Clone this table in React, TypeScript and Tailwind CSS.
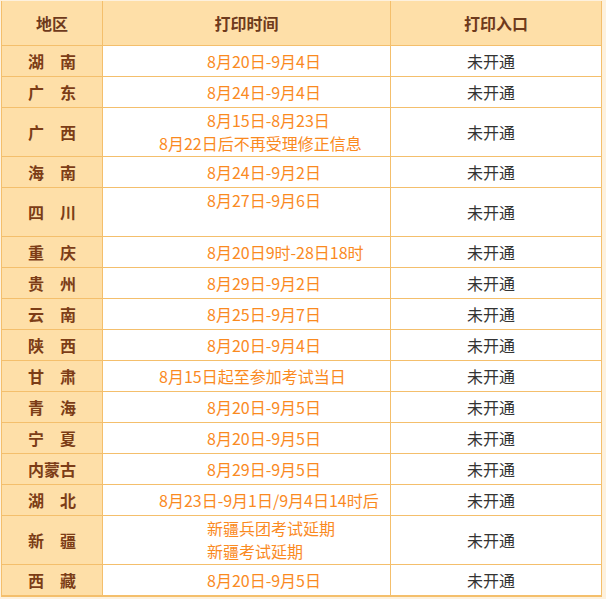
import React from "react";

interface Line {
  text: string;
  long?: boolean;
}

interface Row {
  region: string;
  lines: Line[];
  tall?: boolean;
}

const rows: Row[] = [
  { region: "湖　南", lines: [{ text: "8月20日-9月4日" }] },
  { region: "广　东", lines: [{ text: "8月24日-9月4日" }] },
  {
    region: "广　西",
    tall: true,
    lines: [{ text: "8月15日-8月23日" }, { text: "8月22日后不再受理修正信息", long: true }],
  },
  { region: "海　南", lines: [{ text: "8月24日-9月2日" }] },
  { region: "四　川", tall: true, lines: [{ text: "8月27日-9月6日" }, { text: "\u00a0" }] },
  { region: "重　庆", lines: [{ text: "8月20日9时-28日18时" }] },
  { region: "贵　州", lines: [{ text: "8月29日-9月2日" }] },
  { region: "云　南", lines: [{ text: "8月25日-9月7日" }] },
  { region: "陕　西", lines: [{ text: "8月20日-9月4日" }] },
  { region: "甘　肃", lines: [{ text: "8月15日起至参加考试当日", long: true }] },
  { region: "青　海", lines: [{ text: "8月20日-9月5日" }] },
  { region: "宁　夏", lines: [{ text: "8月20日-9月5日" }] },
  { region: "内蒙古", lines: [{ text: "8月29日-9月5日" }] },
  { region: "湖　北", lines: [{ text: "8月23日-9月1日/9月4日14时后", long: true }] },
  {
    region: "新　疆",
    tall: true,
    lines: [{ text: "新疆兵团考试延期" }, { text: "新疆考试延期" }],
  },
  { region: "西　藏", lines: [{ text: "8月20日-9月5日" }] },
];

export default function App() {
  return (
    <div
      className="min-h-[599px] bg-[#fdf1de] pt-px pl-px text-[16px]"
      style={{ fontFamily: '"Noto Sans CJK SC", "Noto Sans", sans-serif' }}
    >
      <div className="w-[601px] border-x border-b border-[#f4bf6c]">
        {/* Header */}
        <div className="grid h-[45px] grid-cols-[101px_288px_210px] border-b border-[#f4bf6c] bg-[#fedfa8] font-bold text-[#6e3a1c]">
          <div className="flex items-center justify-center border-r border-[#f4bf6c]">地区</div>
          <div className="flex items-center justify-center border-r border-[#f4bf6c]">打印时间</div>
          <div className="flex items-center justify-center">打印入口</div>
        </div>

        {rows.map((row) => (
          <div
            key={row.region}
            className={`grid grid-cols-[101px_288px_210px] border-b border-[#f4bf6c] ${
              row.tall ? "h-[49px]" : "h-[31px]"
            }`}
          >
            <div className="flex items-center justify-center border-r border-[#f4bf6c] bg-[#fedfa8] font-bold text-[#7c3d17]">
              {row.region}
            </div>
            <div className="flex flex-col justify-center border-r border-[#f4bf6c] bg-white leading-[23px] text-[#fa8a1f]">
              {row.lines.map((line, i) => (
                <div key={i} className={line.long ? "pl-[56px]" : "pl-[104px]"}>
                  {line.text}
                </div>
              ))}
            </div>
            <div className="flex items-center bg-white pl-[76px] text-[#333333]">未开通</div>
          </div>
        ))}
      </div>
    </div>
  );
}
